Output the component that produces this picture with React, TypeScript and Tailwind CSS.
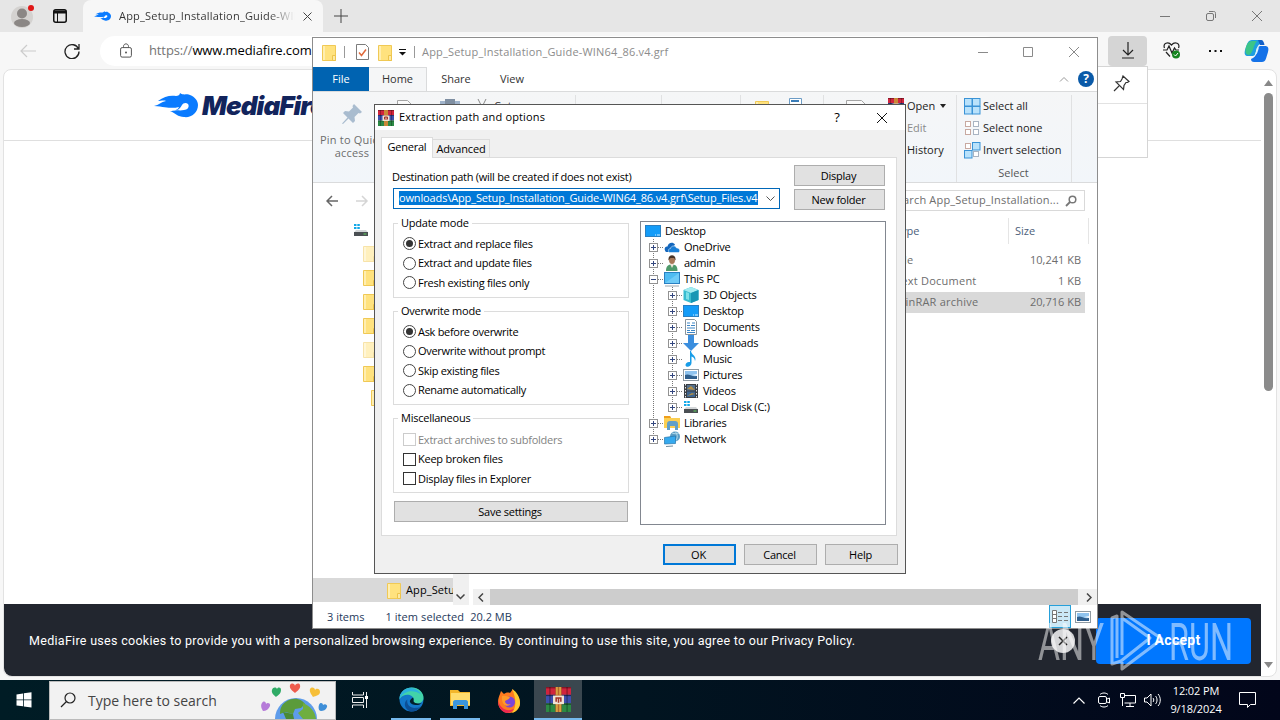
import type { ReactNode } from "react";
import { clsx } from "clsx";

type IconProps = { className?: string };

function Folder({ className }: IconProps) {
  return (
    <svg className={clsx("shrink-0", className)} width="14" height="17" viewBox="0 0 14 17">
      <path d="M.5 1.5h10.5l2.5 0v15H.5z" fill="#ffe27e" stroke="#f0c955" />
      <path d="M1 2h2v14H1z" fill="#ffeeb0" />
      <path d="M10.500 11.500h3v5h-3z" fill="#fde9a3" stroke="#edc44b" />
    </svg>
  );
}

function WinRar({ size = 16 }: { size?: number }) {
  return (
    <svg className="shrink-0" width={size} height={size} viewBox="0 0 16 16">
      <rect width="16" height="5" fill="#d0243d" />
      <rect y="5" width="16" height="5.500" fill="#3d4fae" />
      <rect y="10.500" width="16" height="5.500" fill="#2c8a45" />
      <path d="M0 .5h16M0 5.500h16M0 11h16" stroke="#0008" strokeWidth=".6" />
      <path d="M2.500 0v16M13.500 0v16" stroke="#0004" strokeWidth="1" />
      <rect x="6" width="4" height="16" fill="#b5662b" />
      <path d="M7 0v5M9 0v5M7 11v5M9 11v5" stroke="#e9bd4c" strokeWidth=".8" />
      <rect x="4.500" y="5.500" width="7" height="5.500" fill="#f1e4d4" />
      <path d="M6.500 9.500v-2.500h3v2.500M8 7v3" fill="none" stroke="#a3342b" strokeWidth="1" />
    </svg>
  );
}

function Drive() {
  return (
    <svg className="shrink-0" width="16" height="16" viewBox="0 0 16 16">
      <path d="M1 2h2.500v2H1zM4.300 2h2.500v2H4.300zM1 5h2.500v2H1zM4.300 5h2.500v2H4.300z" fill="#12a8e8" />
      <path d="M3 8h10l2 2.500H1z" fill="#d3d6d8" />
      <rect x="1" y="10" width="14" height="4" fill="#4a4f53" />
      <rect x="10.500" y="11.500" width="3" height="1" fill="#5fd35f" />
    </svg>
  );
}

function Monitor({ stand = false }: { stand?: boolean }) {
  return (
    <svg width="16" height="16" viewBox="0 0 16 16">
      <rect x=".5" y={stand ? 1.5 : 2.500} width="15" height="11" fill={stand ? "#4fbcf2" : "#149cf8"} stroke="#2a80c2" />
      {stand ? <path d="M1 12L15 2v10z" fill="#6fcbf7" /> : <path d="M10 12h1M12 12h3" stroke="#d4efff" />}
      {stand && <path d="M1 15h14" stroke="#9aa6ae" />}
    </svg>
  );
}

const treeIcons: Record<string, ReactNode> = {
  desktop: <Monitor />,
  pc: <Monitor stand />,
  drive: <Drive />,
  onedrive: (
    <svg width="17" height="16" viewBox="0 0 17 16">
      <path d="M1 11.500C0 9 1.500 7.500 3.500 7.500 4 4 8.500 2 11 5.500L6 13H3c-1 0-1.700-.5-2-1.500z" fill="#1467bd" />
      <path d="M5.500 13.500c-2-1.500-1-4 1-4 .5-3 5-3.500 6-.5 3-.5 4.500 3.500 2 4.500z" fill="#1a7fd6" stroke="#fff" strokeWidth=".5" />
    </svg>
  ),
  user: (
    <svg width="16" height="16" viewBox="0 0 16 16">
      <path d="M2 16c0-5 2-6.500 6-6.500s5.500 2 5.500 6.500z" fill="#4f9a6b" />
      <path d="M6 9l2 4 2-4z" fill="#f0e4d8" />
      <ellipse cx="8" cy="5" rx="3" ry="4" fill="#a87858" />
      <path d="M4.500 5.500c-1-7 8-7 7 0L10 3H6.500z" fill="#4a3527" />
    </svg>
  ),
  cube: (
    <svg width="16" height="16" viewBox="0 0 16 16">
      <path d="M8 0l7.500 3v10L8 16 .5 13V3z" fill="#38bcd0" />
      <path d="M8 0l7.500 3L8 6 .5 3z" fill="#a3ebf0" />
      <path d="M8 6v10l7.500-3V3z" fill="#1796b4" />
      <path d="M3 5l3 1v7l-3-1z" fill="#7ee0e8" />
    </svg>
  ),
  docs: (
    <svg width="16" height="16" viewBox="0 0 16 16">
      <path d="M2.500.5h9l2 2v13h-11z" fill="#fff" stroke="#8a949b" />
      <path d="M4 4h3M9 4h3M4 6.500h3M8 6.500h4M4 9h8M4 11.500h3M8 11.500h4M4 13.500h8" stroke="#3d86c6" />
    </svg>
  ),
  down: (
    <svg width="16" height="16" viewBox="0 0 16 16">
      <path d="M5 0h6v8h5l-8 8-8-8h5z" fill="#3b8ede" />
    </svg>
  ),
  music: (
    <svg width="16" height="16" viewBox="0 0 16 16">
      <path d="M8 0c.5 4 6 5 4 10-.3-3-2-4-3.500-4.500V12c0 4-6 5-6 2 0-2 2-3.500 4.500-3V0z" fill="#189de8" />
    </svg>
  ),
  pics: (
    <svg width="16" height="16" viewBox="0 0 16 16">
      <rect x=".5" y="2.500" width="15" height="11" fill="#fff" stroke="#8f9aa2" />
      <rect x="2" y="4" width="12" height="8" fill="#8fc3ee" />
      <path d="M2 8c4-2 6 2 12 1v3H2z" fill="#2f5f8d" />
      <path d="M9 8l5-1v2z" fill="#eef6fb" />
    </svg>
  ),
  video: (
    <svg width="16" height="16" viewBox="0 0 16 16">
      <rect x="1" y="1" width="14" height="14" fill="#3b3f44" />
      <path d="M2.500 1v14M13.500 1v14" stroke="#e4e8ea" strokeDasharray="1.500 1.500" />
      <rect x="4" y="2" width="8" height="5.500" fill="#54708c" />
      <rect x="4" y="8.500" width="8" height="5.500" fill="#3e6590" />
      <path d="M4 6l4-3 4 4zM4 13l5-3 3 1z" fill="#b58f45" />
    </svg>
  ),
  libs: (
    <svg width="16" height="16" viewBox="0 0 16 16">
      <path d="M0 1h6l1 2h9v10H0z" fill="#fbcf52" />
      <path d="M0 1h6l1 2H0z" fill="#ef9e1b" />
      <path d="M3 15V9c0-2 1-3 3-3h5c2 0 3 1 3 3v6h-3v-4H6v4z" fill="#5f9fc8" />
    </svg>
  ),
  network: (
    <svg width="16" height="16" viewBox="0 0 16 16">
      <circle cx="11" cy="5.500" r="5" fill="#5b9dc4" />
      <path d="M11 .5c3 3 3 7 0 10M8 2c3 1 5 1 7 0" stroke="#b5dcec" fill="none" />
      <path d="M.5 6.500L11.500 5v7.500L.5 13z" fill="#35a9ee" stroke="#2576ac" strokeWidth=".7" />
      <path d="M2 15.500l7-.5" stroke="#6f8b9c" />
    </svg>
  ),
};

const tree = [
  { level: 0, label: "Desktop", icon: "desktop" },
  { level: 1, label: "OneDrive", icon: "onedrive" },
  { level: 1, label: "admin", icon: "user" },
  { level: 1, label: "This PC", icon: "pc", open: true },
  { level: 2, label: "3D Objects", icon: "cube" },
  { level: 2, label: "Desktop", icon: "desktop" },
  { level: 2, label: "Documents", icon: "docs" },
  { level: 2, label: "Downloads", icon: "down" },
  { level: 2, label: "Music", icon: "music" },
  { level: 2, label: "Pictures", icon: "pics" },
  { level: 2, label: "Videos", icon: "video" },
  { level: 2, label: "Local Disk (C:)", icon: "drive", last: true },
  { level: 1, label: "Libraries", icon: "libs" },
  { level: 1, label: "Network", icon: "network", last: true },
];

function Branch({ open, last, plain }: { open?: boolean; last?: boolean; plain?: boolean }) {
  return (
    <svg className="shrink-0" width="19" height="16" viewBox="0 0 19 16">
      <path d={last ? "M9.500 0v8" : "M9.500 0v16"} stroke="#777" strokeDasharray="1 1" />
      {!plain && (
        <>
          <path d="M14 8.500h5" stroke="#777" strokeDasharray="1 1" />
          <rect x="5.500" y="4.500" width="8" height="8" fill="#fff" stroke="#929292" />
          <path d={open ? "M7 8.500h5" : "M7 8.500h5M9.500 6v5"} stroke="#34477f" />
        </>
      )}
    </svg>
  );
}

function FolderTree() {
  return (
    <div className="h-[304px] w-[246px] border border-[#828790] bg-white pt-px pl-[3px]">
      {tree.map((node) => (
        <div key={`${node.level}${node.label}`} className="flex h-4 items-center">
          {node.level === 2 && <Branch plain />}
          {node.level > 0 && <Branch open={node.open} last={node.last} />}
          <span className="ml-px flex w-5 shrink-0">{treeIcons[node.icon]}</span>
          <span>{node.label}</span>
        </div>
      ))}
    </div>
  );
}

function Group({ title, children, className }: { title: string; children: ReactNode; className?: string }) {
  return (
    <fieldset className={clsx("w-[236px] border border-[#dcdcdc] pl-[9px]", className)}>
      <legend className="-ml-[5px] px-[3px] leading-3">{title}</legend>
      {children}
    </fieldset>
  );
}

function Radio({ label, checked }: { label: string; checked?: boolean }) {
  return (
    <div className="flex h-[19.500px] items-center gap-[2px] tracking-[-0.300px]">
      <span className="flex size-[13px] items-center justify-center rounded-full border border-[#444] bg-white">
        {checked && <span className="size-[7px] rounded-full bg-[#333]" />}
      </span>
      {label}
    </div>
  );
}

function Check({ label, disabled }: { label: string; disabled?: boolean }) {
  return (
    <div className={clsx("flex h-[19.500px] items-center gap-[2px]", disabled && "text-[#838383]")}>
      <span className={clsx("size-[13px] border bg-white", disabled ? "border-[#ccc]" : "border-[#333]")} />
      {label}
    </div>
  );
}

function DialogButton({ children, className }: { children: ReactNode; className?: string }) {
  return (
    <button className={clsx("flex h-[21px] items-center justify-center bg-[#e1e1e1] pt-[2px] pr-[2px]", className ?? "w-[91px] border border-[#adadad]")}>
      {children}
    </button>
  );
}

function ExtractDialog() {
  return (
    <div className="absolute top-[104px] left-[374px] flex h-[470px] w-[532px] flex-col border border-[#555] bg-[#f0f0f0] text-[11px] tracking-[-0.24px] text-black">
      <div className="flex h-[25px] items-center bg-white pl-[3px] tracking-[0.15px]">
        <WinRar />
        <span className="ml-[5px] flex-1">Extraction path and options</span>
        <span className="mr-[36px] text-[13px]">?</span>
        <svg className="mr-[17px]" width="12" height="12" viewBox="0 0 12 12">
          <path d="M1 1l10 10M11 1L1 11" stroke="#111" />
        </svg>
      </div>
      <div className="mt-[7px] ml-[6px] flex h-5 items-end">
        <div className="z-10 -mb-px flex h-[21px] w-[52px] justify-center border border-b-0 border-[#dcdcdc] bg-white pt-[1px]">General</div>
        <div className="flex h-[18px] w-[57px] items-center justify-center border border-b-0 border-l-0 border-[#dcdcdc] pt-[2px] tracking-[-0.15px]">
          Advanced
        </div>
      </div>
      <div className="ml-[6px] flex h-[379px] w-[516px] flex-col border border-[#dcdcdc] bg-white pl-[11px]">
        <div className="mt-[7px] flex">
          <div className="w-[401px]">
            <div className="-ml-px h-[23px] pt-[4px] leading-4 tracking-[-0.26px]">Destination path (will be created if does not exist)</div>
            <div className="flex h-[21px] w-[387px] items-center border border-[#0067b8] pb-px pl-[5px]">
              <span className="h-[14px] w-[359px] overflow-hidden bg-[#0078d7] leading-[13px] tracking-[-0.135px] whitespace-nowrap text-white">
                ownloads\App_Setup_Installation_Guide-WIN64_86.v4.grf\Setup_Files.v4
              </span>
              <svg className="mt-[2px] ml-[8px]" width="9" height="6" viewBox="0 0 9 6">
                <path d="M.5.5l4 4 4-4" fill="none" stroke="#555" />
              </svg>
            </div>
          </div>
          <div className="flex flex-col gap-[3px]">
            <DialogButton>Display</DialogButton>
            <DialogButton>New folder</DialogButton>
          </div>
        </div>
        <div className="mt-[7px] flex gap-[11px]">
          <div>
            <Group title="Update mode" className="h-[81px]">
              <div className="pt-[5px]">
                <Radio label="Extract and replace files" checked />
                <Radio label="Extract and update files" />
                <Radio label="Fresh existing files only" />
              </div>
            </Group>
            <Group title="Overwrite mode" className="mt-[7px] h-[100px]">
              <div className="pt-[5px]">
                <Radio label="Ask before overwrite" checked />
                <Radio label="Overwrite without prompt" />
                <Radio label="Skip existing files" />
                <Radio label="Rename automatically" />
              </div>
            </Group>
            <Group title="Miscellaneous" className="mt-[7px] h-[81px]">
              <div className="pt-[6px]">
                <Check label="Extract archives to subfolders" disabled />
                <Check label="Keep broken files" />
                <Check label="Display files in Explorer" />
              </div>
            </Group>
            <DialogButton className="mt-[8px] ml-px w-[234px] border border-[#adadad]">Save settings</DialogButton>
          </div>
          <div className="pt-1">
            <FolderTree />
          </div>
        </div>
      </div>
      <div className="mt-[8px] mr-[7px] flex justify-end gap-[8px]">
        <DialogButton className="w-[73px] border-2 border-[#0078d7]">OK</DialogButton>
        <DialogButton className="w-[73px] border border-[#adadad]">Cancel</DialogButton>
        <DialogButton className="w-[73px] border border-[#adadad]">Help</DialogButton>
      </div>
    </div>
  );
}

function Tiles({ kind }: { kind: "all" | "none" | "invert" }) {
  const cells = [
    [1, 1],
    [9, 1],
    [1, 9],
    [9, 9],
  ];
  return (
    <svg className="shrink-0" width="17" height="17" viewBox="0 0 17 17">
      {cells.map(([x, y], i) => {
        const on = kind === "all" || (kind === "invert" && (i === 1 || i === 2));
        return on ? (
          <rect key={i} x={x - 0.5} y={y - 0.5} width="7.500" height="7.500" fill="#b9e2fb" stroke="#3a93d6" />
        ) : (
          <rect key={i} x={x + 0.5} y={y + 0.5} width="5" height="5" fill="#fff" stroke={i % 2 ? "#a9b4c2" : "#c8a9a0"} />
        );
      })}
    </svg>
  );
}

function Ribbon() {
  return (
    <div className="flex h-[92px] border-t border-b border-[#dadbdc] bg-linear-to-b from-[#f5f6f7] to-[#f2f6fa] pt-[3px] text-[#222]">
      <div className="flex w-[263px] border-r border-[#e0e1e2] text-[#6d6d6d]">
        <div className="flex w-[78px] flex-col items-center text-center leading-[13px] tracking-[0.2px]">
          <svg className="mt-[7px] mb-[7px]" width="24" height="24" viewBox="0 0 24 24">
            <path d="M14 2l8 8-2 1.500-1.500-.5-4 4 .5 4-2 2-4.500-4.500L3 22l-1-.5 5.500-6L3 11l2-2 4 .5 4-4-.5-1.500z" fill="#a9bccf" />
          </svg>
          Pin to Quick access
        </div>
        <svg className="mt-[5px] ml-[2px]" width="24" height="24" viewBox="0 0 24 24">
          <path d="M4.500 20V.5h10l4 4V20z" fill="#fafafa" stroke="#a5a5a5" />
        </svg>
        <svg className="mt-[3px] ml-[22px]" width="24" height="24" viewBox="0 0 24 24">
          <path d="M1 3h20v20H1z" fill="#9fb3cb" />
          <path d="M6 1h10v5H6z" fill="#7f8fa2" />
        </svg>
        <svg className="mt-[4px] ml-[13px]" width="12" height="12" viewBox="0 0 12 12">
          <path d="M2 0l5 10M10 0L5 10" stroke="#888" fill="none" />
        </svg>
        <span className="mt-[3px] ml-[6px] text-[#333]">Cut</span>
      </div>
      <div className="w-[86px] border-r border-[#e0e1e2]" />
      <div className="w-[79px] border-r border-[#e0e1e2]" />
      <div className="flex w-[83px] gap-[20px] border-r border-[#e0e1e2] pt-[5px] pl-[14px]">
        <Folder />
        <svg className="-mt-[2px]" width="16" height="16" viewBox="0 0 16 16">
          <path d="M.5.5h12v15H.5z" fill="#fff" stroke="#6c9cc6" />
          <path d="M2 3h8" stroke="#3a7db8" strokeWidth="2" />
        </svg>
      </div>
      <div className="flex w-[133px] border-r border-[#e0e1e2]">
        <svg className="mt-[5px] ml-[21px]" width="24" height="24" viewBox="0 0 24 24">
          <path d="M1.500 20V.5h15l4 4V20z" fill="#fafafa" stroke="#a5a5a5" />
        </svg>
        <div className="ml-[19px] pt-[3px]">
          <WinRar />
        </div>
        <div className="ml-[3px] flex flex-col">
          <span className="flex h-[22px] items-center gap-[5px]">
            Open
            <svg width="6" height="4" viewBox="0 0 6 4">
              <path d="M0 0h6L3 4z" fill="#222" />
            </svg>
          </span>
          <span className="flex h-[22px] items-center text-[#8a8a8a]">Edit</span>
          <span className="flex h-[22px] items-center">History</span>
        </div>
      </div>
      <div className="w-[115px] border-r border-[#e0e1e2] pl-[7px]">
        <div className="flex h-[22px] items-center gap-[2px]"><Tiles kind="all" />Select all</div>
        <div className="flex h-[22px] items-center gap-[2px]"><Tiles kind="none" />Select none</div>
        <div className="flex h-[22px] items-center gap-[2px]"><Tiles kind="invert" />Invert selection</div>
        <div className="flex h-[24px] items-center justify-center pr-2 text-[#555]">Select</div>
      </div>
    </div>
  );
}

const files = [
  { type: "File", size: "10,241 KB" },
  { type: "Text Document", size: "1 KB" },
  { type: "WinRAR archive", size: "20,716 KB", selected: true },
];

const sidebarFolders = [
  "ml-[50px] opacity-50",
  "ml-[50px]",
  "ml-[50px]",
  "ml-[50px]",
  "ml-[50px] opacity-50",
  "ml-[50px]",
  "ml-[58px]",
];

function Explorer() {
  return (
    <div className="absolute top-[37px] left-[312px] flex h-[592px] w-[786px] flex-col border border-[#8d8d8d] bg-white text-[11px]">
      <div className="flex h-[29px] items-center pb-px pl-[9px] text-[#8c8c8c]">
        <Folder />
        <span className="ml-[8px] h-3 w-px bg-[#999]" />
        <svg className="ml-[11px]" width="13" height="16" viewBox="0 0 13 16">
          <path d="M.5.5h9l3 3v12H.5z" fill="#fff" stroke="#7c7c7c" />
          <path d="M3 8.500l2.500 3L10 5.500" fill="none" stroke="#e06a3c" strokeWidth="1.500" />
        </svg>
        <span className="ml-[9px] flex"><Folder /></span>
        <svg className="ml-[7px]" width="7" height="7" viewBox="0 0 7 7">
          <path d="M0 .5h7" stroke="#111" />
          <path d="M0 3h7L3.500 6.500z" fill="#111" />
        </svg>
        <span className="ml-[8px] h-3 w-px bg-[#999]" />
        <span className="ml-[7px] flex-1 tracking-[0.18px]">App_Setup_Installation_Guide-WIN64_86.v4.grf</span>
        <svg className="mr-[17px]" width="102" height="12" viewBox="0 0 102 12">
          <path d="M0 6.500h10M45.500 1.500h9v9h-9zM91 1l10 10M101 1L91 11" fill="none" stroke="#8a8a8a" />
        </svg>
      </div>
      <div className="flex h-[24px] items-center text-[#333]">
        <div className="flex h-full w-[56px] items-center justify-center bg-[#0063b1] text-white">File</div>
        <div className="-mb-px flex h-[25px] w-[58px] items-center justify-center border-t border-r border-[#dadbdc] bg-[#f5f6f7] pb-[2px]">Home</div>
        <div className="w-[58px] text-center">Share</div>
        <div className="w-[54px] text-center">View</div>
        <svg className="ml-auto" width="10" height="6" viewBox="0 0 10 6">
          <path d="M1 5.500l4-4 4 4" fill="none" stroke="#999" />
        </svg>
        <span className="mr-[3px] ml-[9px] flex size-4 items-center justify-center rounded-full bg-[#0a5aa8] text-[12px] font-bold text-white">?</span>
      </div>
      <Ribbon />
      <div className="flex h-[35px] items-center">
        <svg className="ml-[13px]" width="43" height="12" viewBox="0 0 43 12">
          <path d="M12 6H1M6 1L1 6l5 5" fill="none" stroke="#666" strokeWidth="1.500" />
          <path d="M30 6h11M36 1l5 5-5 5" fill="none" stroke="#d5d5d5" strokeWidth="1.500" />
        </svg>
        <div className="mr-[12px] ml-auto flex h-[21px] w-[214px] items-center justify-end border border-[#d9d9d9] pr-[7px] tracking-[0.18px] text-[#6d6d6d]">
          Search App_Setup_Installation...
          <svg className="ml-[6px]" width="12" height="12" viewBox="0 0 12 12">
            <circle cx="7.500" cy="4.500" r="3.300" fill="none" stroke="#777" strokeWidth="1.500" />
            <path d="M5 7L1 11" stroke="#777" strokeWidth="1.800" />
          </svg>
        </div>
      </div>
      <div className="flex h-[387px]">
        <div className="flex w-[140px] flex-col">
          <div className="-mt-px flex h-6 items-center pt-[2px] pl-[40px]"><Drive /></div>
          {sidebarFolders.map((cls, i) => (
            <div key={i} className="flex h-6 items-center">
              <Folder className={cls} />
            </div>
          ))}
          <div className="mt-auto mb-[3px] flex h-6 items-center overflow-hidden bg-[#d9d9d9] pl-[74px] whitespace-nowrap">
            <Folder />
            <span className="ml-[5px] tracking-[0.1px] text-black">App_Setup</span>
          </div>
        </div>
        <div className="flex w-[16px] flex-col justify-end bg-[#f0f0f0]">
          <svg className="mb-[5px] ml-[3px]" width="9" height="6" viewBox="0 0 9 6">
            <path d="M.5.5l4 4 4-4" fill="none" stroke="#444" strokeWidth="1.500" />
          </svg>
        </div>
        <div className="flex flex-1 flex-col">
          <div className="flex h-[26px] justify-end pr-[8px] text-[#4c607a]">
            <div className="flex w-[114px] items-center border-r border-[#e5e5e5]">Type</div>
            <div className="flex w-[80px] items-center border-r border-[#e5e5e5] pl-[6px]">Size</div>
          </div>
          <div className="mt-[6px] text-[#6d6d6d]">
            {files.map((file) => (
              <div key={file.type} className={clsx("mr-[12px] flex h-[21px] items-center justify-end", file.selected && "bg-[#d9d9d9]")}>
                <span className="w-[110px] tracking-[0.24px]">{file.type}</span>
                <span className="w-[80px] pr-[4px] text-right">{file.size}</span>
              </div>
            ))}
          </div>
          <div className="mt-auto ml-[4px] flex h-[16px] items-center bg-[#f0f0f0]">
            <svg className="mx-[5px]" width="6" height="9" viewBox="0 0 6 9">
              <path d="M5 .5l-4 4 4 4" fill="none" stroke="#444" strokeWidth="1.500" />
            </svg>
            <div className="ml-px h-full flex-1 bg-[#cdcdcd]" />
            <svg className="mr-[5px] ml-[8px]" width="6" height="9" viewBox="0 0 6 9">
              <path d="M1 .5l4 4-4 4" fill="none" stroke="#444" strokeWidth="1.500" />
            </svg>
          </div>
        </div>
      </div>
      <div className="flex flex-1 items-center text-[#1e395b]">
        <span className="ml-[14px] pt-[2px]">3 items</span>
        <span className="ml-[21px] pt-[2px] tracking-[0.08px]">1 item selected</span>
        <span className="ml-[6px] pt-[2px]">20.2 MB</span>
        <div className="mr-[5px] ml-auto flex items-center">
          <span className="flex h-[23px] w-[22px] items-center justify-center border border-[#26a0da] bg-[#cbe8f6]">
            <svg width="16" height="13" viewBox="0 0 16 13">
              <path d="M.5.5h4v12h-4zM.5 4.500h4M.5 8.500h4" fill="#fff" stroke="#777" />
              <path d="M6 2.500h4M12 2.500h4M6 6.500h4M12 6.500h4M6 10.500h4M12 10.500h4" stroke="#777" />
            </svg>
          </span>
          <span className="ml-[4px] flex w-[17px]">{treeIcons.pics}</span>
        </div>
      </div>
    </div>
  );
}

function Flame({ className }: IconProps) {
  return (
    <svg className={clsx("shrink-0", className)} viewBox="0 0 44 26">
      <path
        d="M0 14c5-1 7-4 12-5-2-1-6 0-8 0 6-5 13-6 18-5 2 0 4-1 4-3 4 3 7 0 10 2 5 2 8 6 8 10 0 8-7 13-14 12-6 0-9-4-14-6 4 0 8-1 9-4-8 2-12 0-25-1z"
        fill="#0a7bff"
      />
      <path d="M19 18c6 1 7-2 9-5 1-2 4-3 6-1 2 3-1 6-4 6-4 1-7 0-11 0z" fill="#fff" />
    </svg>
  );
}

function Browser() {
  return (
    <div className="flex h-[680px] flex-col bg-[#f7f7f7]">
      <div className="flex h-[32px] items-center bg-[#e6e6e6]">
        <svg className="ml-[11px]" width="24" height="26" viewBox="0 0 24 26">
          <circle cx="11" cy="14" r="11" fill="#d4d2d0" />
          <circle cx="11" cy="10.500" r="5" fill="#8b8785" />
          <ellipse cx="11" cy="20" rx="8" ry="4" fill="#8b8785" />
          <circle cx="20" cy="5" r="3" fill="#e01717" />
        </svg>
        <svg className="ml-[18px]" width="14" height="14" viewBox="0 0 14 14">
          <rect x=".75" y=".75" width="12.500" height="12.500" rx="2" fill="none" stroke="#111" strokeWidth="1.500" />
          <path d="M1 3h12" stroke="#111" strokeWidth="3" />
          <path d="M4.500 4v9" stroke="#111" />
        </svg>
        <div className="ml-[16px] flex h-full w-[240px] items-center rounded-t-lg bg-[#f7f7f7] pl-[11px] text-[12px] text-[#333]">
          <Flame className="h-[12px] w-[17px]" />
          <span className="ml-[8px] w-[176px] overflow-hidden bg-linear-to-r from-[#333] from-85% to-transparent bg-clip-text text-[11px] tracking-[0.2px] whitespace-nowrap text-transparent">
            App_Setup_Installation_Guide-WIN64
          </span>
          <svg className="ml-[8px]" width="9" height="9" viewBox="0 0 9 9">
            <path d="M.5.5l8 8M8.500.5l-8 8" stroke="#444" />
          </svg>
        </div>
        <svg className="ml-[11px]" width="14" height="14" viewBox="0 0 14 14">
          <path d="M7 0v14M0 7h14" stroke="#444" />
        </svg>
        <svg className="mr-[17px] ml-auto" width="103" height="12" viewBox="0 0 103 12">
          <path d="M0 6.500h10M92 1l10 10M102 1L92 11" fill="none" stroke="#777" />
          <rect x="46.500" y="3.500" width="7" height="7" rx="1.500" fill="none" stroke="#777" />
          <path d="M49 1.500h4.500c1.500 0 2 .5 2 2V8" fill="none" stroke="#777" />
        </svg>
      </div>
      <div className="flex h-[37px] items-center">
        <svg className="ml-[20px]" width="16" height="14" viewBox="0 0 16 14">
          <path d="M16 7H1M7 1L1 7l6 6" fill="none" stroke="#ccc" strokeWidth="1.200" />
        </svg>
        <svg className="ml-[28px]" width="16" height="16" viewBox="0 0 16 16">
          <path d="M14.500 6A7 7 0 1 0 15 8.500M15 1v5h-5" fill="none" stroke="#222" strokeWidth="1.300" />
        </svg>
        <div className="ml-[20px] flex h-[30px] w-[900px] items-center rounded-full bg-white pl-[20px] text-[13px] tracking-[-0.12px] text-black">
          <svg width="12" height="15" viewBox="0 0 12 15">
            <rect x=".6" y="4.600" width="10.800" height="9.500" rx="1.500" fill="none" stroke="#555" />
            <path d="M3.500 4.500v-1c0-3.500 5-3.500 5 0v1" fill="none" stroke="#555" />
            <circle cx="6" cy="9.500" r="1" fill="#555" />
          </svg>
          <span className="ml-[17px] pt-px">
            <span className="text-[#757575]">https://</span>www.mediafire.com
          </span>
        </div>
        <div className="ml-[108px] flex h-[30px] w-[39px] items-center justify-center rounded bg-[#d5d5d5]">
          <svg width="14" height="17" viewBox="0 0 14 17">
            <path d="M7 0v13M2 8l5 5 5-5M1 16h12" fill="none" stroke="#222" strokeWidth="1.200" />
          </svg>
        </div>
        <svg className="ml-[16px]" width="18" height="17" viewBox="0 0 18 17">
          <path d="M1.500 6C-.5 1.500 5-1 8.500 3 12-1 17.500 1.500 15.500 6M3 10l4 4.500" fill="none" stroke="#222" strokeWidth="1.200" />
          <path d="M0 8h4l2-4 3 7 2.500-5L13 8h3" fill="none" stroke="#222" strokeWidth="1.200" />
          <circle cx="13" cy="12.500" r="4" fill="#15851f" />
          <path d="M11 12.500l1.500 1.500 2.500-3" fill="none" stroke="#fff" />
        </svg>
        <svg className="ml-[27px]" width="15" height="4" viewBox="0 0 15 4">
          <path d="M1 2h2M6.500 2h2M12 2h2" stroke="#111" strokeWidth="2" />
        </svg>
        <svg className="ml-[21px]" width="26" height="24" viewBox="0 0 26 24">
          <path d="M8 1h8c2 0 3 1 3 3l-3 1c-2 1-3 3-4 7-1 5-2 5-5 5H4c-3 0-4-2-3-6C3 5 4 1 8 1z" fill="#1d9fe0" />
          <path d="M2 8c1-4 3-6 6-6h5c-3 2-4 13-8 14-4 0-4-4-3-8z" fill="#3cc588" />
          <path d="M14 1h3c2 0 3 2 3.500 5H16z" fill="#1360c8" />
          <path d="M18 23h-8c-2 0-3-1-3-3l2-1c2-1 3-3 4-7 1-5 2-5 5-5h3c3 0 4 2 3 6-2 6-2 10-6 10z" fill="#1572e8" />
          <path d="M13 9l2-1c-1 4-2 8-4 8z" fill="#d8f5ff" />
        </svg>
      </div>
      <div className="mr-[3px] ml-[3px] flex h-[608px] rounded-t-lg rounded-b-lg border border-[#e2e2e2] bg-white">
        <div className="flex flex-1 flex-col overflow-hidden rounded-bl-lg">
          <div className="flex h-[71px] items-center border-b border-[#dfdfdf] pl-[149px]">
            <Flame className="h-[26px] w-[46px]" />
            <span className="ml-[3px] font-['Inter'] text-[26px] font-black tracking-[-0.9px] text-[#12245c] italic">MediaFire</span>
          </div>
          <div className="mt-auto flex h-[72px] items-center bg-[#22262f] pl-[25px] font-['Roboto'] text-[12.500px] text-white">
            <span className="pt-[2px] tracking-[0.295px] whitespace-nowrap">
              MediaFire uses cookies to provide you with a personalized browsing experience. By continuing to use this site, you agree to our Privacy Policy.
            </span>
            <span className="mt-[2px] mr-[21px] ml-auto flex size-6 items-center justify-center rounded-full bg-[#d5d6d8]">
              <svg width="10" height="10" viewBox="0 0 10 10">
                <path d="M1 1l8 8M9 1L1 9" stroke="#222" strokeWidth="1.500" />
              </svg>
            </span>
            <span className="mt-[1px] mr-[10px] flex h-[46px] w-[155px] items-center justify-center rounded bg-[#0077ff] text-[14px] font-bold tracking-[0.300px]">
              I Accept
            </span>
          </div>
        </div>
        <div className="flex w-[15px] flex-col items-center pt-[10px] pb-[8px]">
          <svg width="9" height="6" viewBox="0 0 9 6">
            <path d="M4.500 0L9 6H0z" fill="#888" />
          </svg>
          <div className="mt-[7px] h-[298px] w-[9px] rounded-full bg-[#8b8b8b]" />
          <svg className="mt-auto" width="9" height="6" viewBox="0 0 9 6">
            <path d="M4.500 6L9 0H0z" fill="#888" />
          </svg>
        </div>
      </div>
    </div>
  );
}

function Earth() {
  return (
    <svg className="mr-[4px] ml-auto" width="74" height="38" viewBox="0 0 74 38">
      <circle cx="39" cy="38" r="21" fill="#5e9cea" />
      <path d="M30 20c8-5 16-1 18 3l-4 4-6 1-2 5-8-2-5 2c0-6 2-10 7-13z" fill="#5b9b3a" />
      <path d="M46 22c7 3 12 8 13 16H46l-5-6 5-4z" fill="#6fae3f" />
      <path d="M26 31l10 2 1 5h-8z" fill="#4a8a34" />
      <path d="M33 4c2-3 5-1 5 1 0-2 4-4 5-1 1 4-3 6-5 8-2-2-6-4-5-8z" fill="#ee5c4d" />
      <path d="M53 8c2-3 5-1 5 1 1-2 5-2 5 2 0 3-4 4-7 5-1-2-4-5-3-8z" fill="#f6bf38" />
      <path d="M15 9c1-3 4-3 5-1 1-2 4-2 4 1 0 4-3 5-5 7-2-2-5-4-4-7z" fill="#2fab66" />
      <path d="M5 22c2-3 4-1 4 1 1-2 5-1 4 2-1 3-4 5-7 5-1-2-3-5-1-8z" fill="#b67bd9" />
      <path d="M62 24c1-3 4-2 4 0 2-2 5 0 4 2-1 3-4 4-6 4s-3-3-2-6z" fill="#3f8fd8" />
    </svg>
  );
}

function Taskbar() {
  return (
    <div className="flex h-[40px] items-center bg-linear-to-r from-[#001c25] via-[#011420] via-50% to-[#02061a] text-white">
      <svg className="ml-[16px]" width="16" height="16" viewBox="0 0 15 16">
        <path d="M0 2.500l6.500-1V7.500H0zM7.300 1.300L15 .2v7.300H7.300zM0 8.300h6.500v6L0 13.500zM7.300 8.300H15v7.300l-7.700-1.100z" fill="#fff" />
      </svg>
      <div className="ml-[17px] flex h-[39px] w-[287px] items-end overflow-hidden border border-[#bbb] bg-[#f2f2f2] text-[14px] text-[#444]">
        <div className="flex h-full items-center pl-[10px]">
          <svg width="16" height="16" viewBox="0 0 16 16">
            <circle cx="10" cy="6" r="5" fill="none" stroke="#222" strokeWidth="1.200" />
            <path d="M6.500 9.500L1 15" stroke="#222" strokeWidth="1.200" />
          </svg>
          <span className="ml-[12px]">Type here to search</span>
        </div>
        <Earth />
      </div>
      <svg className="ml-[16px]" width="16" height="16" viewBox="0 0 16 16">
        <path d="M.5 0v3h11V0M.5 16v-3h11v3M.5 5.500h11v5h-11z" fill="none" stroke="#eee" />
        <path d="M14.500 0v16" stroke="#eee" />
        <path d="M14.500 4v3" stroke="#fff" strokeWidth="3" />
      </svg>
      <div className="ml-[22px] flex h-full w-[42px] flex-col items-center justify-between pt-[7px]">
        <svg width="25" height="25" viewBox="0 0 24 24">
          <circle cx="12" cy="12" r="11.500" fill="#1377c9" />
          <path d="M.5 12C1 4 7 .5 12 .5c8 0 12 6 11.500 10.500C23 15 19 16.500 15 16c-2-.5-1-2-1-4 0-4-6-6-10-3.500C2 9.500 1 11 .5 12z" fill="#42d3a8" />
          <path d="M.5 12C0 5 6 1 11 1c5 0 9 3 10 6-7-5-17-4-20.500 5z" fill="#2cb1dd" />
          <path d="M8 12c-1 5 3 9 9 8 2 0 3-1 4-1.500-3 4.500-7 5.500-10 5-6-2-7-9-3-11.500z" fill="#0c4f96" />
          <path d="M13.500 10c1 1.500.3 3 .5 4 1 2 5 2.500 8 1-3 3.500-10 3-11.500-.5-.5-1.500 1-3.500 3-4.500z" fill="#02202c" />
        </svg>
        <span className="h-[2px] w-[40px] bg-[#76b9ed]" />
      </div>
      <div className="ml-[7px] flex h-full w-[42px] flex-col items-center justify-between pt-[10px]">
        <svg width="21" height="19" viewBox="0 0 21 19">
          <path d="M0 0h8l2 2h10v14H0z" fill="#f3b62c" />
          <path d="M1 3h19v12H1z" fill="#ffdc6d" />
          <path d="M3 19v-7c0-1 1-2 2-2h11c1 0 2 1 2 2v7h-4v-4H7v4z" fill="#3b96dd" />
        </svg>
        <span className="h-[2px] w-[40px] bg-[#76b9ed]" />
      </div>
      <svg className="ml-[16px]" width="24" height="25" viewBox="0 0 24 25">
        <path d="M3 6l1-3 3 3c1-1 4-2 6-1l3-4 1 4c4 2 6 6 6 10 0 6-5 10-11 10S1 20 1 14c0-3 1-6 2-8z" fill="#ff7a1f" />
        <path d="M15 1c5 3 8 8 8 14 0 5-4 9-8 10 4-5 5-13 0-24z" fill="#ffca30" />
        <path d="M1 12c2 9 9 12 16 9-2 3-5 4-7 4C4 24 1 19 1 12z" fill="#ee2950" />
        <circle cx="12.500" cy="14" r="5.500" fill="#7b46d8" />
        <path d="M5 8c4-1 6 1 8 1-1 3-4 3-5 4 0 3 3 4 6 3-4 4-10 1-9-8z" fill="#ff9a2a" />
      </svg>
      <div className="ml-[13px] flex h-full w-[48px] flex-col items-center justify-between bg-[#3a474f] pt-[7px]">
        <WinRar size={25} />
        <span className="h-[2px] w-full bg-[#76b9ed]" />
      </div>
      <div className="mr-[24px] ml-auto flex items-center text-[11px]">
        <svg width="12" height="7" viewBox="0 0 12 7">
          <path d="M.5 6.500L6 1l5.500 5.500" fill="none" stroke="#fff" strokeWidth="1.200" />
        </svg>
        <svg className="ml-[13px]" width="12" height="16" viewBox="0 0 12 16">
          <path d="M2 2.500c2-2 6-2 8 0M2 13.500c2 2 6 2 8 0M9 7l2.500-1v5L9 10" fill="none" stroke="#fff" />
          <rect x=".5" y="4.500" width="8" height="7" rx="1.500" fill="none" stroke="#fff" />
        </svg>
        <svg className="ml-[10px]" width="17" height="14" viewBox="0 0 17 14">
          <path d="M4.500 2.500h11v7.500h-11M10 10v3M6 13.500h8M.5.500h4v4h-4zM2.500 4.500V13" fill="none" stroke="#fff" />
        </svg>
        <svg className="ml-[7px]" width="17" height="14" viewBox="0 0 17 14">
          <path d="M.5 5h2.500l4-4v12l-4-4H.5zM9 5c1 1 1 3 0 4M11.500 3c2 2 2 6 0 8M14 1c3 3 3 9 0 12" fill="none" stroke="#fff" />
        </svg>
        <div className="ml-[8px] w-[54px] text-center leading-[18px] tracking-[-0.1px] whitespace-nowrap">
          12:02 PM
          <br />
          9/18/2024
        </div>
        <svg className="ml-[16px]" width="17" height="16" viewBox="0 0 17 16">
          <path d="M.5.500h16v12h-5l-3 3v-3h-8z" fill="none" stroke="#fff" />
        </svg>
      </div>
    </div>
  );
}

function DownloadsFlyout() {
  return (
    <div className="absolute top-[66px] left-[1080px] h-[92px] w-[68px] border border-[#d5d5d5] bg-white">
      <div className="flex h-[37px] items-center justify-end border-b border-[#e2e2e2] pr-[17px] pb-[4px]">
        <svg width="17" height="17" viewBox="0 0 17 17">
          <path d="M10 1l6 5.500-1.500 1-1.500 0-2 3-.5 4L3 7l4.500-.5L9 4zM6 11L1 16" fill="none" stroke="#333" strokeWidth="1.200" />
        </svg>
      </div>
    </div>
  );
}

function Watermark() {
  return (
    <svg className="absolute top-[606px] left-[1036px] opacity-50" width="200" height="68" viewBox="0 0 200 68">
      <g fill="#fff" fontFamily="Roboto" fontWeight="400" fontSize="52">
        <text x="2" y="53.500" textLength="66" lengthAdjust="spacingAndGlyphs">ANY</text>
        <text x="133" y="53.500" textLength="64" lengthAdjust="spacingAndGlyphs">RUN</text>
      </g>
      <path d="M81 52V10l-5 2v46l9-3 29-23-28-20v37M86 12V6l40 27-40 30v-7" fill="none" stroke="#fff" strokeWidth="3" strokeLinejoin="round" />
    </svg>
  );
}

export default function App() {
  return (
    <div className="relative h-[720px] w-[1280px] overflow-hidden bg-[#f7f7f7] font-['Open_Sans','Noto_Sans',sans-serif]">
      <Browser />
      <Taskbar />
      <DownloadsFlyout />
      <Explorer />
      <ExtractDialog />
      <Watermark />
    </div>
  );
}
